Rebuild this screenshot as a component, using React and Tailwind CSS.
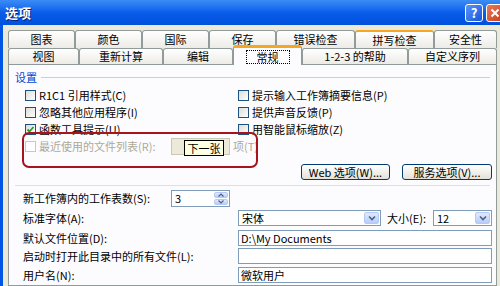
import React from 'react'

const row1 = [
  { label: '图表', w: 'w-[67px]' },
  { label: '颜色', w: 'w-[67px]' },
  { label: '国际', w: 'w-[67px]' },
  { label: '保存', w: 'w-[67px]' },
  { label: '错误检查', w: 'w-[79px]' },
  { label: '拼写检查', w: 'w-[79px]', hot: true },
  { label: '安全性', w: 'w-[63px]' }
]

const row2 = [
  { label: '视图', w: 'w-[71px]' },
  { label: '重新计算', w: 'w-[84px]' },
  { label: '编辑', w: 'w-[70px]' },
  { label: '常规', w: 'w-[69px]', active: true },
  { label: '1-2-3 的帮助', w: 'w-[106px]' },
  { label: '自定义序列', w: 'w-[89px]' }
]

const Tab = ({ tab }) => {
  if (tab.active) {
    return (
      <div className={`${tab.w} h-[20px] -mb-px relative z-10 flex items-center justify-center rounded-t-[3px] border-x border-[#919B9C] border-t-[3px] border-t-[#F5A623] bg-[#FCFCFE]`}>
        <span className="px-[10px] border border-dotted border-black leading-[12px]">{tab.label}</span>
      </div>
    )
  }
  return (
    <div
      className={`${tab.w} h-full flex items-center justify-center rounded-t-[3px] border-x border-t border-[#919B9C] bg-gradient-to-b from-white to-[#ECEBE6] ${tab.hot ? 'border-t-[2px] border-t-[#F5A623]' : ''}`}
    >
      {tab.label}
    </div>
  )
}

const Checkbox = ({ checked, disabled }) => (
  <div
    className={`w-[11px] h-[11px] shrink-0 flex items-center justify-center border ${
      disabled ? 'border-[#CAC8BB] bg-white' : 'border-[#1C5180] bg-gradient-to-br from-[#DCDCD7] to-white'
    }`}
  >
    {checked && (
      <svg width="9" height="9" viewBox="0 0 9 9">
        <path d="M1.5 4.5 L3.5 6.5 L7.5 2" stroke="#21A121" strokeWidth="1.8" fill="none" />
      </svg>
    )}
  </div>
)

const CheckRow = ({ label, checked, disabled }) => (
  <div className="flex items-center gap-[3px] h-[17px]">
    <Checkbox checked={checked} disabled={disabled} />
    <span className={disabled ? 'text-[#ACA899]' : 'text-black'}>{label}</span>
  </div>
)

const DropArrow = () => (
  <div className="w-[15px] h-full flex items-center justify-center rounded-[2px] border border-[#B5C8F7] bg-gradient-to-b from-[#E0EAFD] to-[#B7CCF8]">
    <svg width="8" height="6" viewBox="0 0 8 6">
      <path d="M1 1.5 L4 4.5 L7 1.5" stroke="#4D6185" strokeWidth="1.6" fill="none" />
    </svg>
  </div>
)

const SpinArrows = () => (
  <div className="w-[14px] h-full flex flex-col gap-px">
    <div className="flex-1 flex items-center justify-center rounded-[2px] bg-gradient-to-b from-[#E0EAFD] to-[#B7CCF8] border border-[#B5C8F7]">
      <svg width="6" height="4" viewBox="0 0 6 4"><path d="M0.5 3.5 L3 1 L5.5 3.5" stroke="#4D6185" strokeWidth="1.2" fill="none" /></svg>
    </div>
    <div className="flex-1 flex items-center justify-center rounded-[2px] bg-gradient-to-b from-[#E0EAFD] to-[#B7CCF8] border border-[#B5C8F7]">
      <svg width="6" height="4" viewBox="0 0 6 4"><path d="M0.5 0.5 L3 3 L5.5 0.5" stroke="#4D6185" strokeWidth="1.2" fill="none" /></svg>
    </div>
  </div>
)

const XpButton = ({ children, w }) => (
  <div className={`${w} h-[16px] flex items-center justify-center rounded-[3px] border border-[#003C74] bg-gradient-to-b from-white to-[#E3E1D7]`}>
    {children}
  </div>
)

const App = () => {
  return (
    <div className="w-[500px] h-[286px] overflow-hidden whitespace-nowrap flex flex-col bg-[#0055E5] text-[11px] leading-none text-black font-['Noto_Sans_CJK_SC','Noto_Sans',sans-serif]">
      {/* title bar */}
      <div className="h-[25px] shrink-0 flex items-center justify-between pl-[5px] bg-gradient-to-b from-[#3C8CF7] via-[#0A5DEA] to-[#0050DC]">
        <span className="text-white font-bold text-[13px] [text-shadow:1px_1px_0_#0A1E6E]">选项</span>
        <div className="flex items-center gap-[3px] -mr-[4px]">
          <div className="w-[18px] h-[18px] flex items-center justify-center rounded-[3px] border border-white bg-gradient-to-br from-[#5C94F8] to-[#1653D9] text-white font-bold text-[13px]">?</div>
          <div className="w-[18px] h-[18px] flex items-center justify-center rounded-[3px] border border-white bg-gradient-to-br from-[#E97A5A] to-[#C93C12]">
            <svg width="10" height="10" viewBox="0 0 10 10">
              <path d="M1.5 1.5 L8.5 8.5 M8.5 1.5 L1.5 8.5" stroke="white" strokeWidth="2" />
            </svg>
          </div>
        </div>
      </div>

      {/* window body */}
      <div className="flex-1 ml-[3px] bg-[#ECE9D8] pl-[5px] pr-[3px] pt-[5px] flex flex-col">
        <div className="flex h-[18px]">
          {row1.map(t => <Tab key={t.label} tab={t} />)}
        </div>
        <div className="flex h-[16px] items-end">
          {row2.map(t => <Tab key={t.label} tab={t} />)}
        </div>

        {/* tab panel */}
        <div className="relative z-0 flex-1 border border-[#919B9C] bg-[#FCFCFE] flex flex-col">
          <div className="flex items-center gap-[4px] pl-[6px] pr-[6px] pt-[5px] h-[19px]">
            <span className="text-[#0046D5]">设置</span>
            <div className="flex-1 h-px bg-[#D0D0BF]" />
          </div>

          <div className="flex pl-[16px] mt-[3px]">
            <div className="w-[213px] shrink-0 flex flex-col">
              <CheckRow label="R1C1 引用样式(C)" />
              <CheckRow label="忽略其他应用程序(I)" />
              <CheckRow label="函数工具提示(U)" checked />
              <div className="flex items-center h-[17px]">
                <div className="w-[146px] shrink-0 flex items-center gap-[3px]">
                  <Checkbox disabled />
                  <span className="text-[#ACA899]">最近使用的文件列表(R):</span>
                </div>
                <div className="relative shrink-0 w-[59px] h-[17px] border border-[#C9C7BA] bg-[#ECE9D8]">
                  <div className="absolute left-[12px] top-[1px] w-[40px] h-[16px] flex items-center justify-center border border-black bg-[#FFFFE1] text-[11px]">下一张</div>
                </div>
                <span className="ml-[3px] shrink-0 text-[#ACA899]">项(T)</span>
              </div>
            </div>
            <div className="flex flex-col">
              <CheckRow label="提示输入工作簿摘要信息(P)" />
              <CheckRow label="提供声音反馈(P)" />
              <CheckRow label="用智能鼠标缩放(Z)" />
            </div>
          </div>

          <div className="flex justify-end gap-[12px] pr-[4px] mt-[9px]">
            <XpButton w="w-[89px]">Web 选项(W)...</XpButton>
            <XpButton w="w-[90px]">服务选项(V)...</XpButton>
          </div>

          <div className="mx-[6px] mt-[5px] h-px bg-[#E2E1D8]" />

          <div className="flex flex-col pl-[14px] mt-[4px]">
            <div className="flex items-center h-[17px]">
              <span className="w-[148px]">新工作簿内的工作表数(S):</span>
              <div className="w-[59px] h-[17px] flex items-center justify-between border border-[#7F9DB9] bg-white pl-[3px] pr-px py-px">
                <span>3</span>
                <SpinArrows />
              </div>
            </div>
            <div className="flex items-center h-[16px] mt-[3px]">
              <span className="w-[215px]">标准字体(A):</span>
              <div className="w-[143px] h-[16px] flex items-center justify-between border border-[#7F9DB9] bg-white pl-[3px] p-px">
                <span>宋体</span>
                <DropArrow />
              </div>
              <span className="ml-[6px] w-[46px]">大小(E):</span>
              <div className="w-[59px] h-[16px] flex items-center justify-between border border-[#7F9DB9] bg-white pl-[3px] p-px">
                <span>12</span>
                <DropArrow />
              </div>
            </div>
            <div className="flex items-center h-[16px] mt-[4px]">
              <span className="w-[215px]">默认文件位置(D):</span>
              <div className="w-[254px] h-[16px] flex items-center border border-[#7F9DB9] bg-white pl-[2px]">D:\My Documents</div>
            </div>
            <div className="flex items-center h-[16px] mt-[2px]">
              <span className="w-[215px]">启动时打开此目录中的所有文件(L):</span>
              <div className="w-[254px] h-[16px] border border-[#7F9DB9] bg-white" />
            </div>
            <div className="flex items-center h-[16px] mt-[3px]">
              <span className="w-[215px]">用户名(N):</span>
              <div className="w-[254px] h-[16px] flex items-center border border-[#7F9DB9] bg-white pl-[2px]">微软用户</div>
            </div>
          </div>

          {/* red annotation */}
          <div className="absolute left-[13px] top-[67px] w-[236px] h-[36px] rounded-[7px] border-2 border-[#A8141C] pointer-events-none" />
        </div>
      </div>
    </div>
  )
}

export default App
